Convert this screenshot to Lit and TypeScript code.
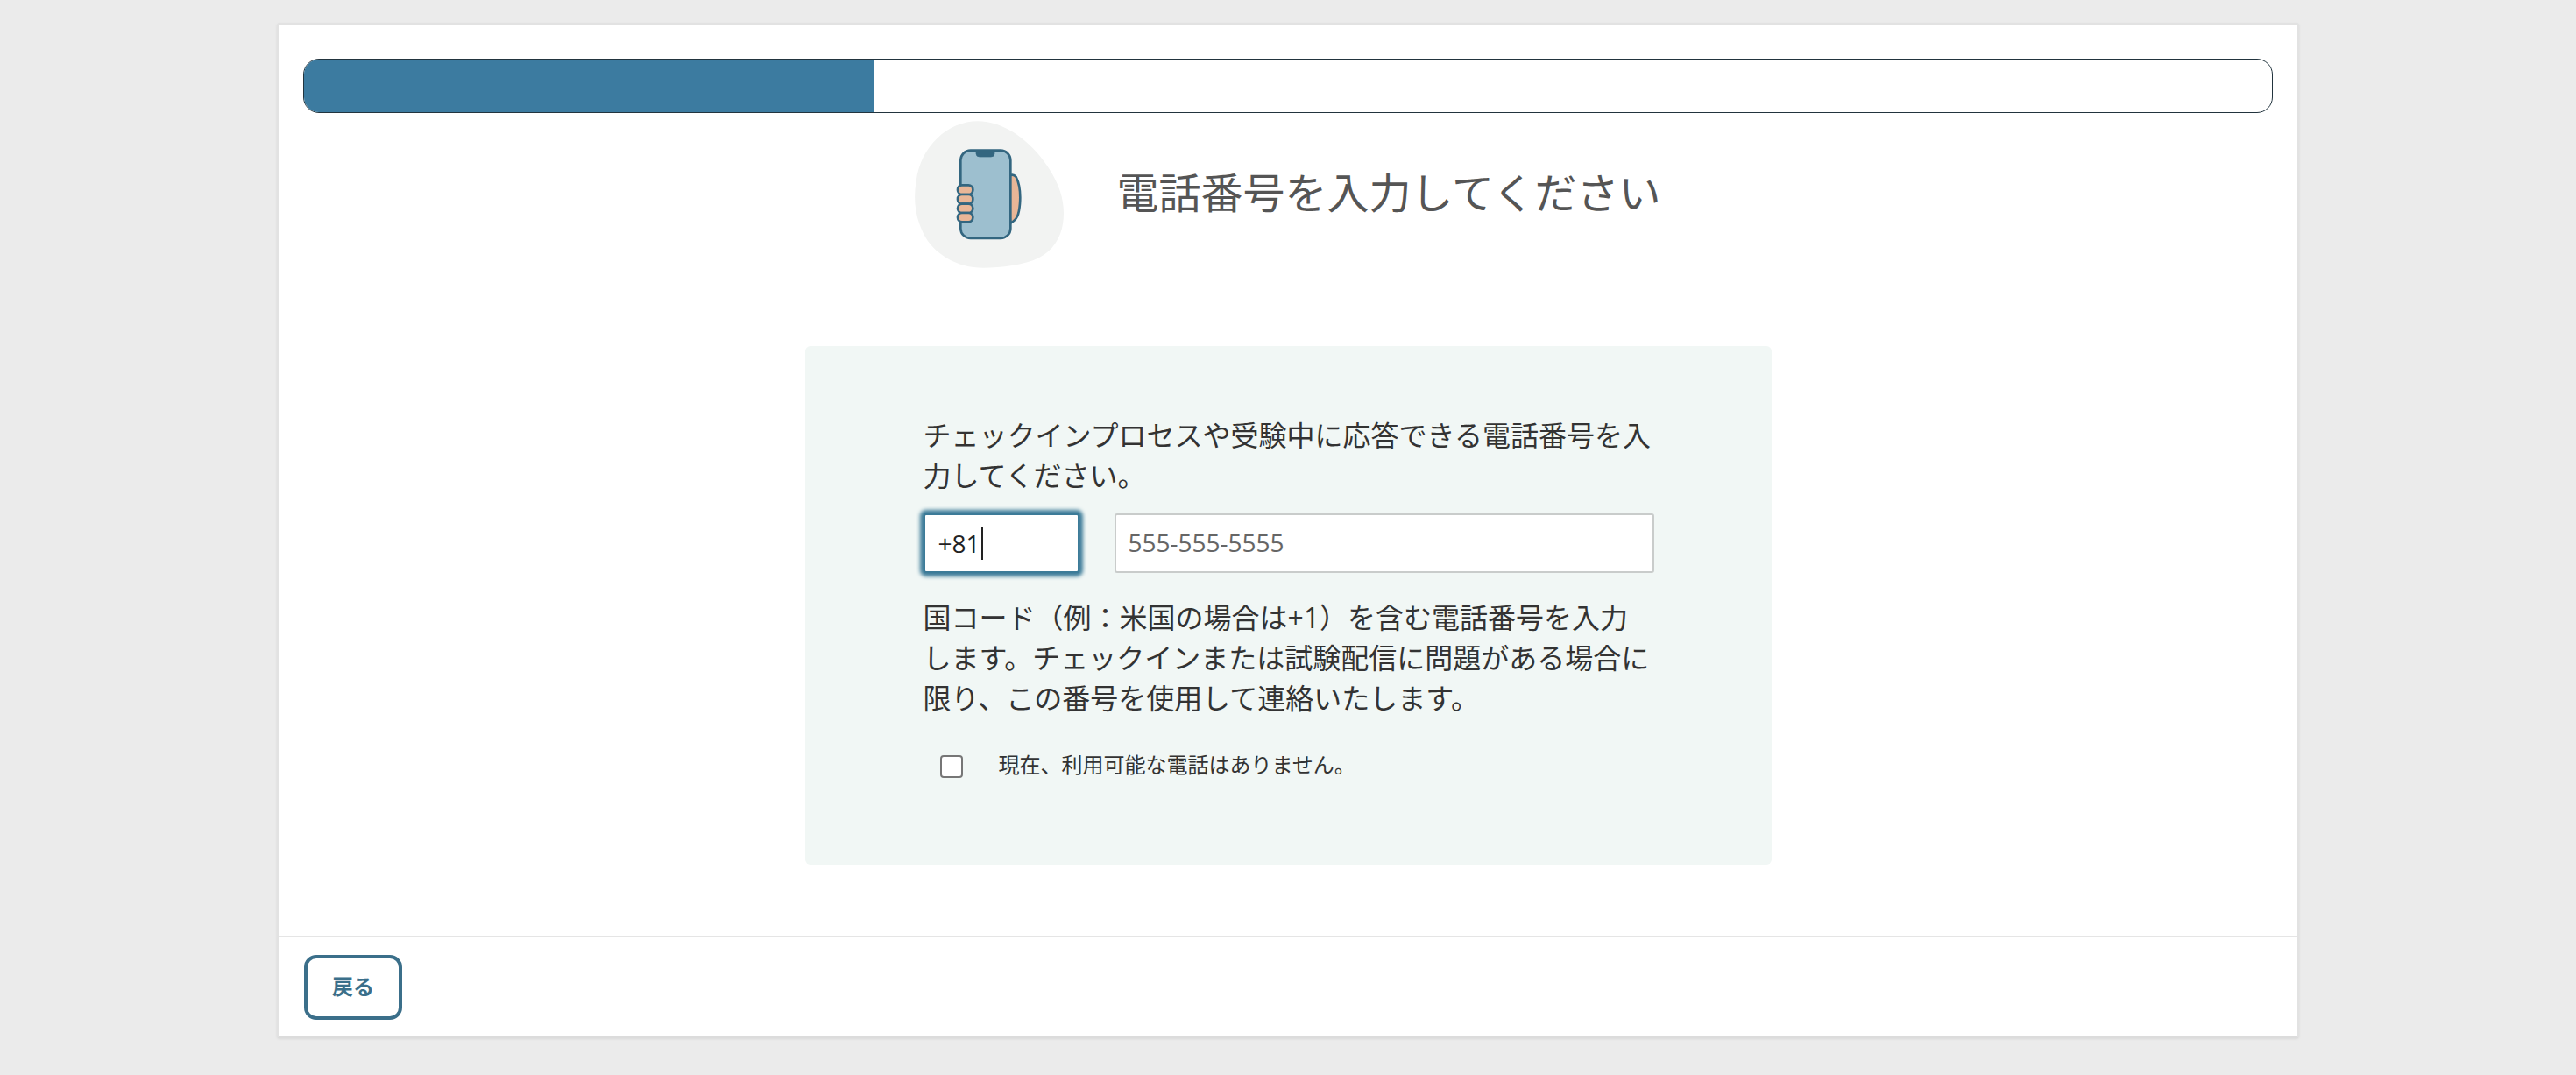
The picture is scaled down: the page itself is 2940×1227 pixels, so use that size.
import { LitElement, html, css } from 'lit';
import { customElement } from 'lit/decorators.js';

@customElement('app-root')
export class AppRoot extends LitElement {
    static styles = css`
    :host {
      display: block;
      height: 1227px;
      overflow: hidden;
      box-sizing: border-box;
      padding-top: 26px;
      background: #ebebeb;
      font-family: "Open Sans", "Noto Sans CJK JP", sans-serif;
      color: #333;
    }
    .card {
      box-sizing: border-box;
      width: 2308px;
      height: 1159px;
      margin: 0 auto;
      display: flex;
      flex-direction: column;
      background: #fff;
      border: 2px solid #e2e2e2;
      border-bottom-color: #dcdcdc;
      border-radius: 3px;
      box-shadow: 0 1px 3px rgba(0, 0, 0, 0.08);
    }
    .body {
      flex: 1;
      padding: 39px 29px 0;
      display: flex;
      flex-direction: column;
      align-items: center;
    }
    .progress {
      box-sizing: border-box;
      width: 2248px;
      height: 62px;
      border: 1px solid #22343e;
      border-radius: 18px;
      overflow: hidden;
      flex: none;
    }
    .progress-fill {
      height: 100%;
      background: #3c7ba0;
    }
    .header {
      display: flex;
      align-items: center;
      gap: 60px;
      margin-top: 9px;
    }
    .header svg {
      display: block;
      width: 170px;
      height: 168px;
    }
    h1 {
      margin: 0 0 4px;
      font-size: 48px;
      font-weight: 400;
      line-height: 64px;
      color: #555;
    }
    .panel {
      box-sizing: border-box;
      width: 1103px;
      height: 592px;
      margin-top: 89px;
      padding: 79px 134px 0 135px;
      background: #f1f7f5;
      border-radius: 6px;
      font-size: 32px;
      line-height: 46px;
    }
    p {
      margin: 0;
    }
    .phone-row {
      display: flex;
      gap: 40px;
      margin-top: 20px;
    }
    .code-field {
      box-sizing: border-box;
      flex: none;
      width: 178px;
      height: 68px;
      padding-left: 15px;
      display: flex;
      align-items: center;
      background: #fff;
      border: 2px solid #3c7b98;
      border-radius: 3px;
      box-shadow: 0 0 4px 4px #3c7b98;
      font-size: 28px;
      color: #222;
    }
    .caret {
      width: 2px;
      height: 37px;
      margin-left: 1px;
      background: #222;
    }
    .number-field {
      box-sizing: border-box;
      flex: none;
      width: 616px;
      height: 68px;
      padding: 0 14px 2px;
      background: #fff;
      border: 2px solid #c9cccb;
      border-radius: 3px;
      outline: none;
      font: 28px "Open Sans", sans-serif;
    }
    .number-field::placeholder {
      color: #666;
      opacity: 1;
    }
    .help {
      margin-top: 28px;
    }
    .no-phone {
      display: flex;
      align-items: center;
      gap: 41px;
      margin-top: 39px;
      padding-left: 19px;
      font-size: 24px;
      line-height: 28px;
    }
    .no-phone span {
      margin-bottom: 4px;
    }
    .no-phone input {
      appearance: none;
      box-sizing: border-box;
      width: 26px;
      height: 26px;
      margin: 0;
      flex: none;
      background: #fff;
      border: 2px solid #767676;
      border-radius: 4px;
    }
    .footer {
      flex: none;
      padding: 20px 29px 19px;
      border-top: 2px solid #e5e5e5;
    }
    .back {
      box-sizing: border-box;
      display: block;
      width: 112px;
      height: 74px;
      padding: 0 0 6px;
      background: #fff;
      border: 4px solid #3b6f8a;
      border-radius: 14px;
      font-family: inherit;
      font-size: 24px;
      font-weight: 700;
      color: #3b6f8a;
    }
  `;

    render() {
        return html`
      <div class="card">
        <div class="body">
          <div class="progress"><div class="progress-fill" style="width: 29%"></div></div>
          <div class="header">
            <svg viewBox="195 85 510 502" aria-hidden="true">
              <path fill="#f2f3f2" d="M410 85C500 85 590 150 650 240C690 300 705 350 705 400C705 470 675 525 620 553C570 578 490 587 430 587C340 587 260 540 225 470C195 410 190 350 200 290C215 170 310 85 410 85Z" />
              <g stroke="#336680" stroke-width="8" stroke-linejoin="round">
                <path fill="#e9b697" d="M515 288C511 268 532 263 542 276C552 296 558 330 555 368C552 405 545 424 522 434Z" />
                <rect x="352" y="185" width="171" height="301" rx="34" fill="#9dbfcf" />
                <path fill="#336680" stroke-width="2" d="M405 186H468V196Q468 207 456 207H417Q405 207 405 196Z" />
                <rect x="342" y="304" width="52" height="32" rx="15" fill="#e9b697" />
                <rect x="342" y="336" width="52" height="32" rx="15" fill="#e9b697" />
                <rect x="342" y="368" width="52" height="31" rx="15" fill="#e9b697" />
                <rect x="342" y="399" width="52" height="31" rx="15" fill="#e9b697" />
              </g>
            </svg>
            <h1>電話番号を入力してください</h1>
          </div>
          <div class="panel">
            <p>チェックインプロセスや受験中に応答できる電話番号を入力してください。</p>
            <div class="phone-row">
              <div class="code-field"><span>+81</span><span class="caret"></span></div>
              <input class="number-field" type="tel" placeholder="555-555-5555" />
            </div>
            <p class="help">国コード（例：米国の場合は+1）を含む電話番号を入力します。チェックインまたは試験配信に問題がある場合に限り、この番号を使用して連絡いたします。</p>
            <label class="no-phone">
              <input type="checkbox" />
              <span>現在、利用可能な電話はありません。</span>
            </label>
          </div>
        </div>
        <div class="footer">
          <button class="back">戻る</button>
        </div>
      </div>
    `;
    }
}
